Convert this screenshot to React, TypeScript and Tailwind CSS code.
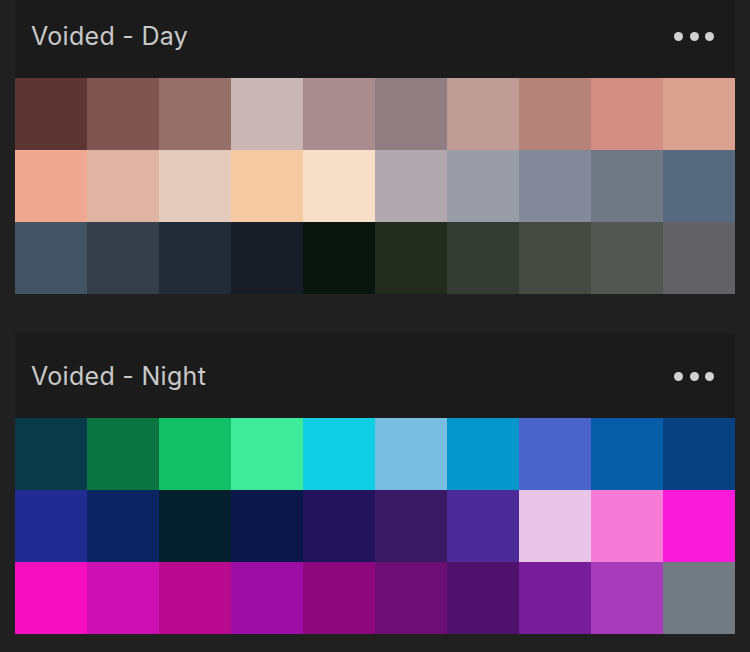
const palettes = [
  {
    name: 'Voided - Day',
    colors: [
      '#5e3535', '#7e5551', '#966f68', '#cab6b5', '#a88c8e', '#917e82', '#c09c96', '#b6837b', '#d28e82', '#dba18f',
      '#f0a990', '#e0b4a2', '#e4c9bd', '#f5c9a2', '#f8e0c8', '#b2a9b0', '#9a9ca8', '#848a99', '#707885', '#566a7f',
      '#435464', '#343d4a', '#222c36', '#161d26', '#0b1510', '#222c1e', '#343b30', '#454a40', '#515651', '#626266',
    ],
  },
  {
    name: 'Voided - Night',
    colors: [
      '#093a49', '#0a7540', '#11bf66', '#3deb9a', '#10cfe5', '#79bde0', '#0596cb', '#4a64cb', '#065ca6', '#074181',
      '#212c92', '#0d2462', '#04202c', '#0b174b', '#22135a', '#371a63', '#4c2b99', '#e8c5e6', '#f57bd7', '#f71bd9',
      '#f60fbe', '#cc0fb0', '#b9098e', '#9c0ea4', '#8d087c', '#6c0e74', '#4f126c', '#771d9b', '#a83bba', '#727a82',
    ],
  },
];

function PaletteCard({ name, colors }: { name: string; colors: string[] }) {
  return (
    <div className="bg-[#1b1b1b]">
      <div className="h-[85px] flex items-center justify-between pl-[16px] pr-[21px]">
        <span className="mt-[2px] text-[25px] tracking-[0.3px] text-[#c9c9c9] font-['Inter',sans-serif]">{name}</span>
        <div className="flex items-center gap-[6.5px] mt-[1px]">
          <span className="w-[9px] h-[9px] rounded-full bg-[#d2d2d2]" />
          <span className="w-[9px] h-[9px] rounded-full bg-[#d2d2d2]" />
          <span className="w-[9px] h-[9px] rounded-full bg-[#d2d2d2]" />
        </div>
      </div>
      <div className="grid grid-cols-10">
        {colors.map((c, i) => (
          <div key={i} className="h-[72px]" style={{ backgroundColor: c }} />
        ))}
      </div>
    </div>
  );
}

export default function App() {
  return (
    <div className="bg-[#202020] h-[652px] overflow-hidden px-[15px]">
      <div className="-mt-[7px] flex flex-col gap-[39px]">
        {palettes.map((p) => (
          <PaletteCard key={p.name} name={p.name} colors={p.colors} />
        ))}
      </div>
    </div>
  );
}
